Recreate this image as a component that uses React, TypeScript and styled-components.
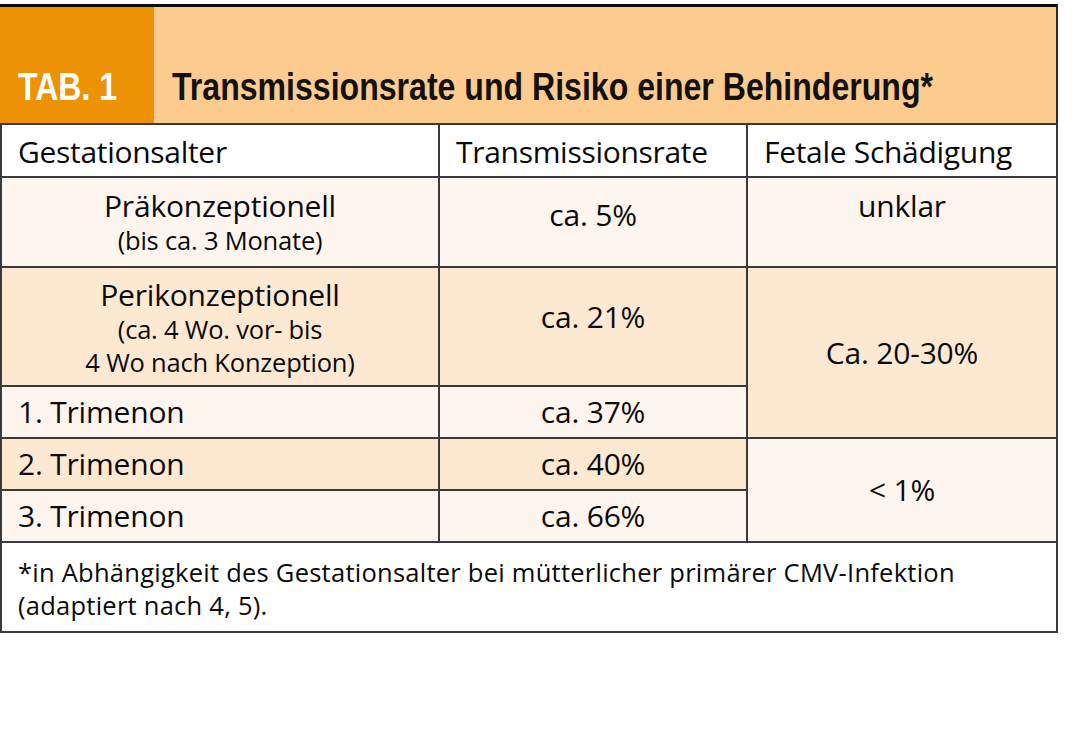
import React from "react";
import styled, { createGlobalStyle } from "styled-components";

const Global = createGlobalStyle`
  html, body { margin: 0; padding: 0; background: #ffffff; }
  body { font-family: "Open Sans", "Noto Sans", sans-serif; color: #0a0a0a; }
`;

const Page = styled.div`
  width: 1058px;
  padding-top: 4px;
`;

const Header = styled.div`
  display: flex;
  height: 116px;
  border-top: 3px solid #0d0d0d;
  border-right: 2px solid #2a2a2a;
`;

const HeaderBlock = styled.div<{ $dark?: boolean }>`
  ${(p) => (p.$dark ? "width: 154px;" : "flex: 1;")}
  background: ${(p) => (p.$dark ? "#ec9204" : "#fdcb8e")};
  color: ${(p) => (p.$dark ? "#ffffff" : "#111111")};
  display: flex;
  align-items: flex-end;
  padding: 0 0 17px 18px;
  box-sizing: border-box;
  overflow: hidden;
`;

const Condensed = styled.span`
  display: inline-block;
  font-family: "Liberation Sans", Arial, sans-serif;
  font-weight: 700;
  font-size: 38px;
  line-height: 1;
  white-space: nowrap;
  transform: scaleX(0.844);
  transform-origin: left bottom;
`;

const Grid = styled.div`
  display: grid;
  grid-template-columns: 436px 306px 308px;
  grid-template-rows: 51px 88px 117px 50px 50px 50px 88px;
  gap: 2px;
  padding: 2px;
  background: #3a3a3a;
`;

type Tone = "white" | "cream" | "peach";
const tones: Record<Tone, string> = {
  white: "#ffffff",
  cream: "#fef5ee",
  peach: "#fde8d2",
};

const Cell = styled.div<{
  $tone: Tone;
  $align?: "left" | "center";
  $valign?: "start" | "center";
  $rows?: number;
  $cols?: number;
}>`
  background: ${(p) => tones[p.$tone]};
  display: flex;
  flex-direction: column;
  justify-content: ${(p) => (p.$valign === "start" ? "flex-start" : "center")};
  align-items: ${(p) => (p.$align === "left" ? "flex-start" : "center")};
  text-align: ${(p) => p.$align ?? "center"};
  padding: ${(p) => (p.$align === "left" ? "0 16px" : "0 8px")};
  font-size: 30px;
  line-height: 1.2;
  grid-row: span ${(p) => p.$rows ?? 1};
  grid-column: span ${(p) => p.$cols ?? 1};
  box-sizing: border-box;
`;

const HeadCell = styled(Cell)`
  font-size: 30px;
  letter-spacing: -0.3px;
  padding-top: 2px;
`;

const Main = styled.span<{ $top?: number }>`
  font-size: 30px;
  line-height: 36px;
  letter-spacing: -0.2px;
  margin-top: ${(p) => p.$top ?? 0}px;
`;

const Sub = styled.span`
  font-size: 25.5px;
  line-height: 33px;
  letter-spacing: -0.2px;
`;

const Footer = styled(Cell)`
  font-size: 25.5px;
  line-height: 33px;
  letter-spacing: 0.25px;
  padding: 4px 16px 0;
`;

const FootLine = styled.span`
  display: block;
  white-space: nowrap;
`;

export default function App() {
  return (
    <Page>
      <Global />
      <Header>
        <HeaderBlock $dark>
          <Condensed>TAB. 1</Condensed>
        </HeaderBlock>
        <HeaderBlock>
          <Condensed>Transmissionsrate und Risiko einer Behinderung*</Condensed>
        </HeaderBlock>
      </Header>
      <Grid>
        <HeadCell $tone="white" $align="left">Gestationsalter</HeadCell>
        <HeadCell $tone="white" $align="left">Transmissionsrate</HeadCell>
        <HeadCell $tone="white" $align="left">Fetale Schädigung</HeadCell>

        <Cell $tone="cream" $valign="start">
          <Main $top={10}>Präkonzeptionell</Main>
          <Sub>(bis ca. 3 Monate)</Sub>
        </Cell>
        <Cell $tone="cream"><Main $top={-14}>ca. 5%</Main></Cell>
        <Cell $tone="cream" $valign="start"><Main $top={10}>unklar</Main></Cell>

        <Cell $tone="peach" $valign="start">
          <Main $top={9}>Perikonzeptionell</Main>
          <Sub>(ca. 4 Wo. vor- bis</Sub>
          <Sub>4 Wo nach Konzeption)</Sub>
        </Cell>
        <Cell $tone="peach"><Main $top={-19}>ca. 21%</Main></Cell>
        <Cell $tone="peach" $rows={2}><Main>Ca. 20-30%</Main></Cell>

        <Cell $tone="cream" $align="left"><Main>1. Trimenon</Main></Cell>
        <Cell $tone="cream"><Main>ca. 37%</Main></Cell>

        <Cell $tone="peach" $align="left"><Main>2. Trimenon</Main></Cell>
        <Cell $tone="peach"><Main>ca. 40%</Main></Cell>
        <Cell $tone="cream" $rows={2}><Main>&lt; 1%</Main></Cell>

        <Cell $tone="cream" $align="left"><Main>3. Trimenon</Main></Cell>
        <Cell $tone="cream"><Main>ca. 66%</Main></Cell>

        <Footer $tone="white" $align="left" $cols={3}>
          <FootLine>*in Abhängigkeit des Gestationsalter bei mütterlicher primärer CMV-Infektion</FootLine>
          <FootLine>(adaptiert nach 4, 5).</FootLine>
        </Footer>
      </Grid>
    </Page>
  );
}
